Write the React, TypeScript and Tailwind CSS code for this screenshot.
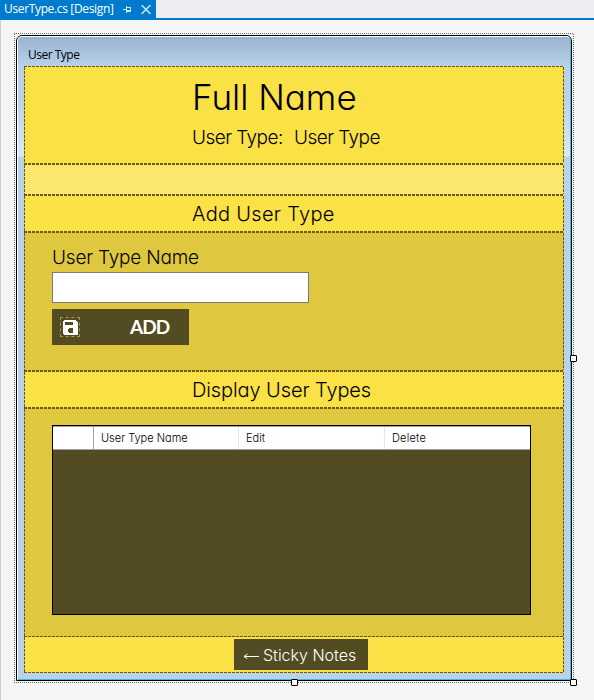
import type { ReactNode } from "react";

const dashH =
  "bg-[repeating-linear-gradient(90deg,#6a5a12_0_3px,transparent_3px_4px)]";
const dashV =
  "bg-[repeating-linear-gradient(180deg,#6a5a12_0_3px,transparent_3px_4px)]";
const dotH =
  "bg-[repeating-linear-gradient(90deg,#6e6e6e_0_1px,transparent_1px_2px)]";
const dotV =
  "bg-[repeating-linear-gradient(180deg,#6e6e6e_0_1px,transparent_1px_2px)]";

const gothic =
  "font-['Inter',sans-serif] [font-feature-settings:'cv11'] font-light whitespace-nowrap text-black";

function Panel({
  className,
  children,
  top = true,
}: {
  className: string;
  children?: ReactNode;
  top?: boolean;
}) {
  return (
    <section className={`flex flex-col shrink-0 ${className}`}>
      <div className={`shrink-0 ${top ? "h-px" : "h-0"} ${dashH}`} />
      <div className="flex min-h-0 flex-1">
        <div className={`w-px shrink-0 ${dashV}`} />
        <div className="min-w-0 flex-1">{children}</div>
        <div className={`w-px shrink-0 ${dashV}`} />
      </div>
      <div className={`h-px shrink-0 ${dashH}`} />
    </section>
  );
}

function Handle({ className }: { className: string }) {
  return (
    <div
      className={`absolute size-[7px] rounded-[1px] border border-black bg-white ${className}`}
    />
  );
}

function SaveIcon() {
  return (
    <svg viewBox="0 0 15 15" className="size-[15px] shrink-0" shapeRendering="crispEdges">
      <path
        fillRule="evenodd"
        fill="#fff"
        d="M1 0H12L15 3V14L14 15H1L0 14V1ZM2 2V5H10V2ZM6 8L5 9V12L6 13H9L10 12V9L9 8Z"
      />
    </svg>
  );
}

export default function App() {
  return (
    <div className="flex h-[700px] w-[594px] flex-col overflow-hidden bg-[#f5f5f5]">
      <header className="flex h-5 shrink-0 flex-col bg-[#eeeef2]">
        <div className="flex h-[18px] w-[156px] items-center bg-[#007acc] pl-1 text-white">
          <span className="w-[109px] whitespace-nowrap font-['Open_Sans',sans-serif] text-[12px] leading-[18px] tracking-[-0.35px]">
            UserType.cs [Design]
          </span>
          <svg viewBox="0 0 9 7" className="ml-[10px] h-[7px] w-[9px]" shapeRendering="crispEdges" fill="#d0e6f5">
            <path d="M0 3H3V4H0ZM3 0H4V7H3ZM4 1H8V2H4ZM7 2H8V5H7ZM4 4H8V6H4Z" />
          </svg>
          <svg viewBox="0 0 10 9" className="ml-[9px] h-[9px] w-[10px]" fill="none" stroke="#d0e6f5" strokeWidth="1.5">
            <path d="M.5 0L9.5 9M9.5 0L.5 9" />
          </svg>
        </div>
        <div className="h-[2px] bg-[#007acc]" />
      </header>
      <main className="flex-1 border-l border-[#cccedb] pl-[13px] pt-[13px]">
        <div className="relative flex h-[650px] w-[560px] flex-col">
          <div className={`h-px shrink-0 ${dotH}`} />
          <div className="flex flex-1">
            <div className={`w-px ${dotV}`} />
            <div className="flex-1 p-px">
              <div className="h-[646px] w-[556px] overflow-hidden rounded-t-[6px] border border-black bg-[#b9d1ea]">
                <div className="h-full rounded-t-[5px] border-b border-l border-r border-t border-b-[#35c0e4] border-l-white border-r-[#35c8f0] border-t-white bg-[linear-gradient(180deg,#99b4d1_0,#b9d1ea_30px,#b9d1ea_60px,#dce8f5_119px,#b9d1ea_120px)] px-[6px]">
                  <h1 className="h-[29px] pl-1 pt-[10px] font-['Open_Sans',sans-serif] text-[12px] leading-[16px] tracking-[-0.5px] text-black">
                    User Type
                  </h1>
                  <div className="w-[540px]">
                    <Panel className="h-[98px] bg-[#fae146]">
                      <h2 className={`${gothic} pl-[167px] pt-[8px] text-[35px] leading-[44px]`}>Full Name</h2>
                      <p className={`${gothic} flex pl-[167px] pt-[7px] text-[19px] leading-[24px] tracking-[-0.55px]`}>
                        <span className="w-[102px]">User Type:</span>
                        <span>User Type</span>
                      </p>
                    </Panel>
                    <Panel className="h-[31px] bg-[#fbe76d]" />
                    <Panel className="h-[37px] bg-[#fae146]">
                      <h2 className={`${gothic} pl-[167px] pt-[4px] text-[20px] leading-[28px] tracking-[0.3px]`}>Add User Type</h2>
                    </Panel>
                    <Panel className="h-[139px] bg-[#dfc83f]">
                      <form className="flex flex-col pl-[27px] pt-[12px]">
                        <label htmlFor="name" className={`${gothic} h-[27px] pt-px text-[19px] leading-[24px] tracking-[-0.2px]`}>User Type Name</label>
                        <input id="name" className="h-[31px] w-[257px] border border-[#7a7a7a] bg-white px-2" />
                        <button type="button" className="mt-[6px] flex h-9 w-[137px] items-center bg-[#534b22] pl-2">
                          <span className="flex size-5 items-center justify-center border border-dashed border-[#a3974e]">
                            <SaveIcon />
                          </span>
                          <span className="ml-[50px] font-['Lato',sans-serif] text-[19px] font-bold tracking-[-0.9px] text-white">ADD</span>
                        </button>
                      </form>
                    </Panel>
                    <Panel className="h-[37px] bg-[#fae146]">
                      <h2 className={`${gothic} pl-[167px] pt-[4px] text-[20px] leading-[28px] tracking-[-0.1px]`}>Display User Types</h2>
                    </Panel>
                    <Panel className="h-[229px] bg-[#dfc83f]">
                      <div className="ml-[27px] mt-[16px] h-[190px] w-[479px] border border-black bg-[#534b22]">
                        <div className={`${gothic} flex h-6 border-y border-[#a0a0a0] bg-white text-[11px] leading-[22px]`}>
                          <span className="w-[41px] border-r border-[#a0a0a0]" />
                          <span className="w-[145px] border-r border-[#e5e5e5] pl-[7px]">User Type Name</span>
                          <span className="w-[146px] border-r border-[#e5e5e5] pl-[7px]">Edit</span>
                          <span className="pl-[7px] tracking-[0.2px]">Delete</span>
                        </div>
                      </div>
                    </Panel>
                    <Panel top={false} className="h-[36px] bg-[#fae146]">
                      <button className={`${gothic} ml-[209px] mt-[2px] flex h-[31px] w-[134px] items-center bg-[#534b22] pl-[9px] text-[16px]`}>
                        <svg viewBox="0 0 16 6" className="mt-[3px] h-[6px] w-4" fill="none" stroke="#fff">
                          <path d="M1 3.5H16M4.5 1L1 3.5L4.5 6" />
                        </svg>
                        <span className="ml-1 text-white">Sticky Notes</span>
                      </button>
                    </Panel>
                  </div>
                </div>
              </div>
            </div>
            <div className={`w-px ${dotV}`} />
          </div>
          <div className={`h-px shrink-0 ${dotH}`} />
          <Handle className="left-[556px] top-[322px]" />
          <Handle className="left-[277px] top-[646px]" />
          <Handle className="left-[556px] top-[646px]" />
        </div>
      </main>
    </div>
  );
}
